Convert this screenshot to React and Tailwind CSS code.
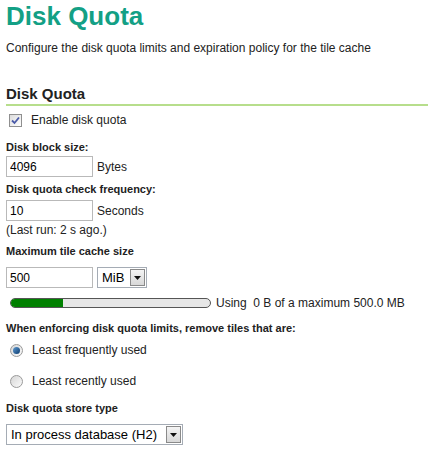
import React from 'react';

// Small XP-style controls drawn by hand so they look like the old GeoServer form
const Checkbox = ({ checked }) => (
  <span className="flex h-[13px] w-[13px] items-center justify-center border border-[#8f8f8f] bg-gradient-to-br from-[#dcdcdc] to-[#ffffff]">
    {checked && (
      <svg width="9" height="9" viewBox="0 0 9 9">
        <path d="M1 4.5 L3.5 7 L8 1.5" fill="none" stroke="#4a5aa8" strokeWidth="1.8" />
      </svg>
    )}
  </span>
);

const Radio = ({ checked }) => (
  <span className="flex h-[13px] w-[13px] items-center justify-center rounded-full border border-[#9a9a9a] bg-gradient-to-br from-[#d6d6d6] to-[#fbfbfb]">
    {checked && <span className="h-[7px] w-[7px] rounded-full bg-gradient-to-br from-[#5f9ad0] to-[#083c70]" />}
  </span>
);

const SelectBox = ({ value, className = '' }) => (
  <div className={`flex h-[21px] items-center border border-[#a5acb5] bg-white pl-[4px] pr-[1px] ${className}`}>
    <span className="flex-1 text-[13px] leading-none text-black">{value}</span>
    <span className="ml-[3px] flex h-[17px] w-[15px] items-center justify-center border border-[#8a8a8a] bg-gradient-to-b from-[#f4f4f4] to-[#d8d8d8]">
      <svg width="7" height="4" viewBox="0 0 7 4">
        <path d="M0 0 L7 0 L3.5 4 Z" fill="#111" />
      </svg>
    </span>
  </div>
);

const TextInput = ({ value }) => (
  <input
    readOnly
    value={value}
    className="h-[21px] w-[87px] border border-[#b9b9b9] bg-white px-[3px] text-[12px] text-black outline-none"
  />
);

const Label = ({ children, className = '' }) => (
  <div className={`text-[11px] font-bold leading-[13px] text-[#222] ${className}`}>{children}</div>
);

export default function App() {
  return (
    <div className="h-[464px] w-[428px] overflow-hidden bg-white pl-[6px] text-[12px] text-[#222]" style={{ fontFamily: '"Liberation Sans", Arial, sans-serif' }}>
      <h1 className="pt-[1px] text-[26px] font-bold leading-[30px] text-[#13a085]">Disk Quota</h1>
      <p className="mt-[10px] leading-[14px]">Configure the disk quota limits and expiration policy for the tile cache</p>

      <h3 className="mt-[30px] border-b-2 border-[#b7de8c] pb-[2px] text-[15px] font-bold leading-[17px] text-[#222]">Disk Quota</h3>

      <div className="mt-[7px] flex items-center gap-[9px] pl-[3px]">
        <Checkbox checked />
        <span className="leading-[14px]">Enable disk quota</span>
      </div>

      <Label className="mt-[14px]">Disk block size:</Label>
      <div className="mt-[2px] flex items-center gap-[4px]">
        <TextInput value="4096" />
        <span>Bytes</span>
      </div>

      <Label className="mt-[6px]">Disk quota check frequency:</Label>
      <div className="mt-[4px] flex items-center gap-[4px]">
        <TextInput value="10" />
        <span>Seconds</span>
      </div>
      <div className="mt-[2px] leading-[14px]">(Last run: 2 s ago.)</div>

      <Label className="mt-[8px]">Maximum tile cache size</Label>
      <div className="mt-[9px] flex items-center gap-[4px]">
        <TextInput value="500" />
        <SelectBox value="MiB" className="w-[50px]" />
      </div>

      <div className="mt-[8px] flex items-center gap-[5px] pl-[4px]">
        <div className="h-[10px] w-[201px] overflow-hidden rounded-[5px] border border-[#555] bg-[#e6e6e6]">
          <div className="h-full w-[52px] bg-[#008000]" />
        </div>
        <span className="leading-[14px]">Using&nbsp; 0 B of a maximum 500.0 MB</span>
      </div>

      <Label className="mt-[12px]">When enforcing disk quota limits, remove tiles that are:</Label>
      <div className="mt-[8px] flex items-center gap-[9px] pl-[4px]">
        <Radio checked />
        <span className="leading-[14px]">Least frequently used</span>
      </div>
      <div className="mt-[17px] flex items-center gap-[9px] pl-[4px]">
        <Radio />
        <span className="leading-[14px]">Least recently used</span>
      </div>

      <Label className="mt-[14px]">Disk quota store type</Label>
      <div className="mt-[9px] flex">
        <SelectBox value="In process database (H2)" className="w-[177px]" />
      </div>
    </div>
  );
}
